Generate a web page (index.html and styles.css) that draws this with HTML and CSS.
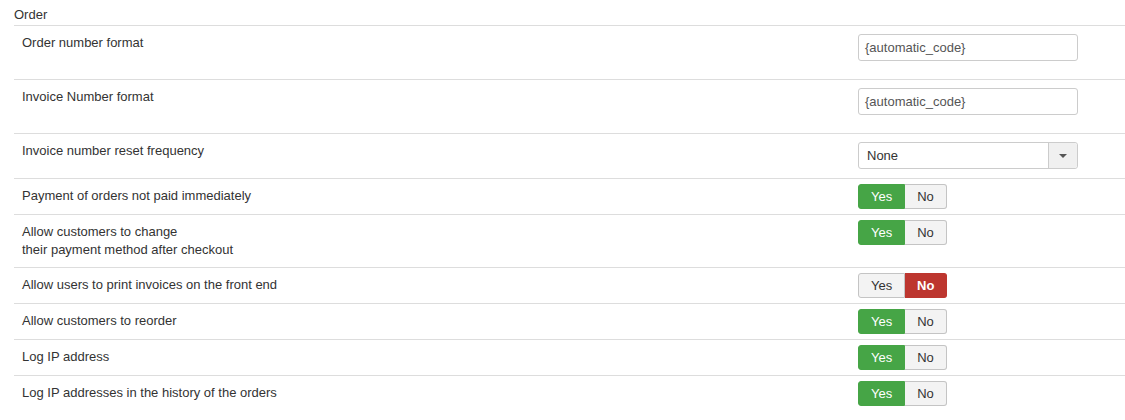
FILE: index.html
```html
<!DOCTYPE html>
<html lang="en">
  <head>
    <meta charset="UTF-8" />
    <title>Order settings</title>
    <link rel="stylesheet" href="styles.css">
  </head>
  <body>
    <div class="section">
      <div class="section-title">Order</div>

      <div class="row row-text">
        <div class="label">Order number format</div>
        <div class="control"><div class="text-input">{automatic_code}</div></div>
      </div>

      <div class="row row-text">
        <div class="label">Invoice Number format</div>
        <div class="control"><div class="text-input">{automatic_code}</div></div>
      </div>

      <div class="row row-select">
        <div class="label">Invoice number reset frequency</div>
        <div class="control">
          <div class="select">
            <span class="select-value">None</span>
            <span class="select-arrow"><span class="caret"></span></span>
          </div>
        </div>
      </div>

      <div class="row">
        <div class="label">Payment of orders not paid immediately</div>
        <div class="control"><div class="yesno"><span class="btn yes active">Yes</span><span class="btn no">No</span></div></div>
      </div>

      <div class="row">
        <div class="label">Allow customers to change<br>their payment method after checkout</div>
        <div class="control"><div class="yesno"><span class="btn yes active">Yes</span><span class="btn no">No</span></div></div>
      </div>

      <div class="row">
        <div class="label">Allow users to print invoices on the front end</div>
        <div class="control"><div class="yesno"><span class="btn yes">Yes</span><span class="btn no active">No</span></div></div>
      </div>

      <div class="row">
        <div class="label">Allow customers to reorder</div>
        <div class="control"><div class="yesno"><span class="btn yes active">Yes</span><span class="btn no">No</span></div></div>
      </div>

      <div class="row">
        <div class="label">Log IP address</div>
        <div class="control"><div class="yesno"><span class="btn yes active">Yes</span><span class="btn no">No</span></div></div>
      </div>

      <div class="row last">
        <div class="label">Log IP addresses in the history of the orders</div>
        <div class="control"><div class="yesno"><span class="btn yes active">Yes</span><span class="btn no">No</span></div></div>
      </div>
    </div>
  </body>
</html>
```

FILE: styles.css
```css
body {
  margin: 0;
  font-family: "Liberation Sans", Arial, sans-serif;
  font-size: 13px;
  color: #333;
  background-color: #ffffff;
}

.section {
  padding-left: 14px;
}

.section-title {
  padding: 6px 0 1px;
  line-height: 18px;
  border-bottom: 1px solid #dddddd;
}

.row {
  display: grid;
  grid-template-columns: 1fr 267px;
  border-bottom: 1px solid #dddddd;
}

.row.last {
  border-bottom: none;
}

.label {
  padding: 8px 0 8px 8px;
  line-height: 18px;
}

.control {
  padding: 5px 0;
}

.row-text .control {
  padding: 8px 0 18px;
}

.row-select .control {
  padding: 8px 0 9px;
}

.text-input,
.select {
  box-sizing: border-box;
  width: 220px;
  height: 27px;
  border: 1px solid #cccccc;
  border-radius: 3px;
  line-height: 25px;
  color: #555;
}

.text-input {
  padding: 0 6px;
}

.select {
  display: flex;
}

.select-value {
  flex: 1;
  padding: 0 8px;
  color: #333;
}

.select-arrow {
  width: 28px;
  border-left: 1px solid #cccccc;
  background-color: #f0f0f0;
  border-radius: 0 3px 3px 0;
  display: flex;
  justify-content: center;
  align-items: center;
}

.caret {
  width: 0;
  height: 0;
  border-left: 4px solid transparent;
  border-right: 4px solid transparent;
  border-top: 4px solid #555;
}

.yesno {
  display: flex;
}

.btn {
  box-sizing: border-box;
  height: 25px;
  line-height: 23px;
  padding: 0 12px;
  border: 1px solid #c4c4c4;
  background-color: #f3f3f3;
  color: #333;
}

.btn.yes {
  width: 47px;
  border-radius: 3px 0 0 3px;
  text-align: center;
}

.btn.no {
  width: 42px;
  border-left: none;
  border-radius: 0 3px 3px 0;
  text-align: center;
}

.btn.yes.active {
  background-color: #46a546;
  border-color: #46a546;
  color: #ffffff;
}

.btn.no.active {
  background-color: #bd362f;
  border-color: #bd362f;
  color: #ffffff;
  font-weight: bold;
}
```
